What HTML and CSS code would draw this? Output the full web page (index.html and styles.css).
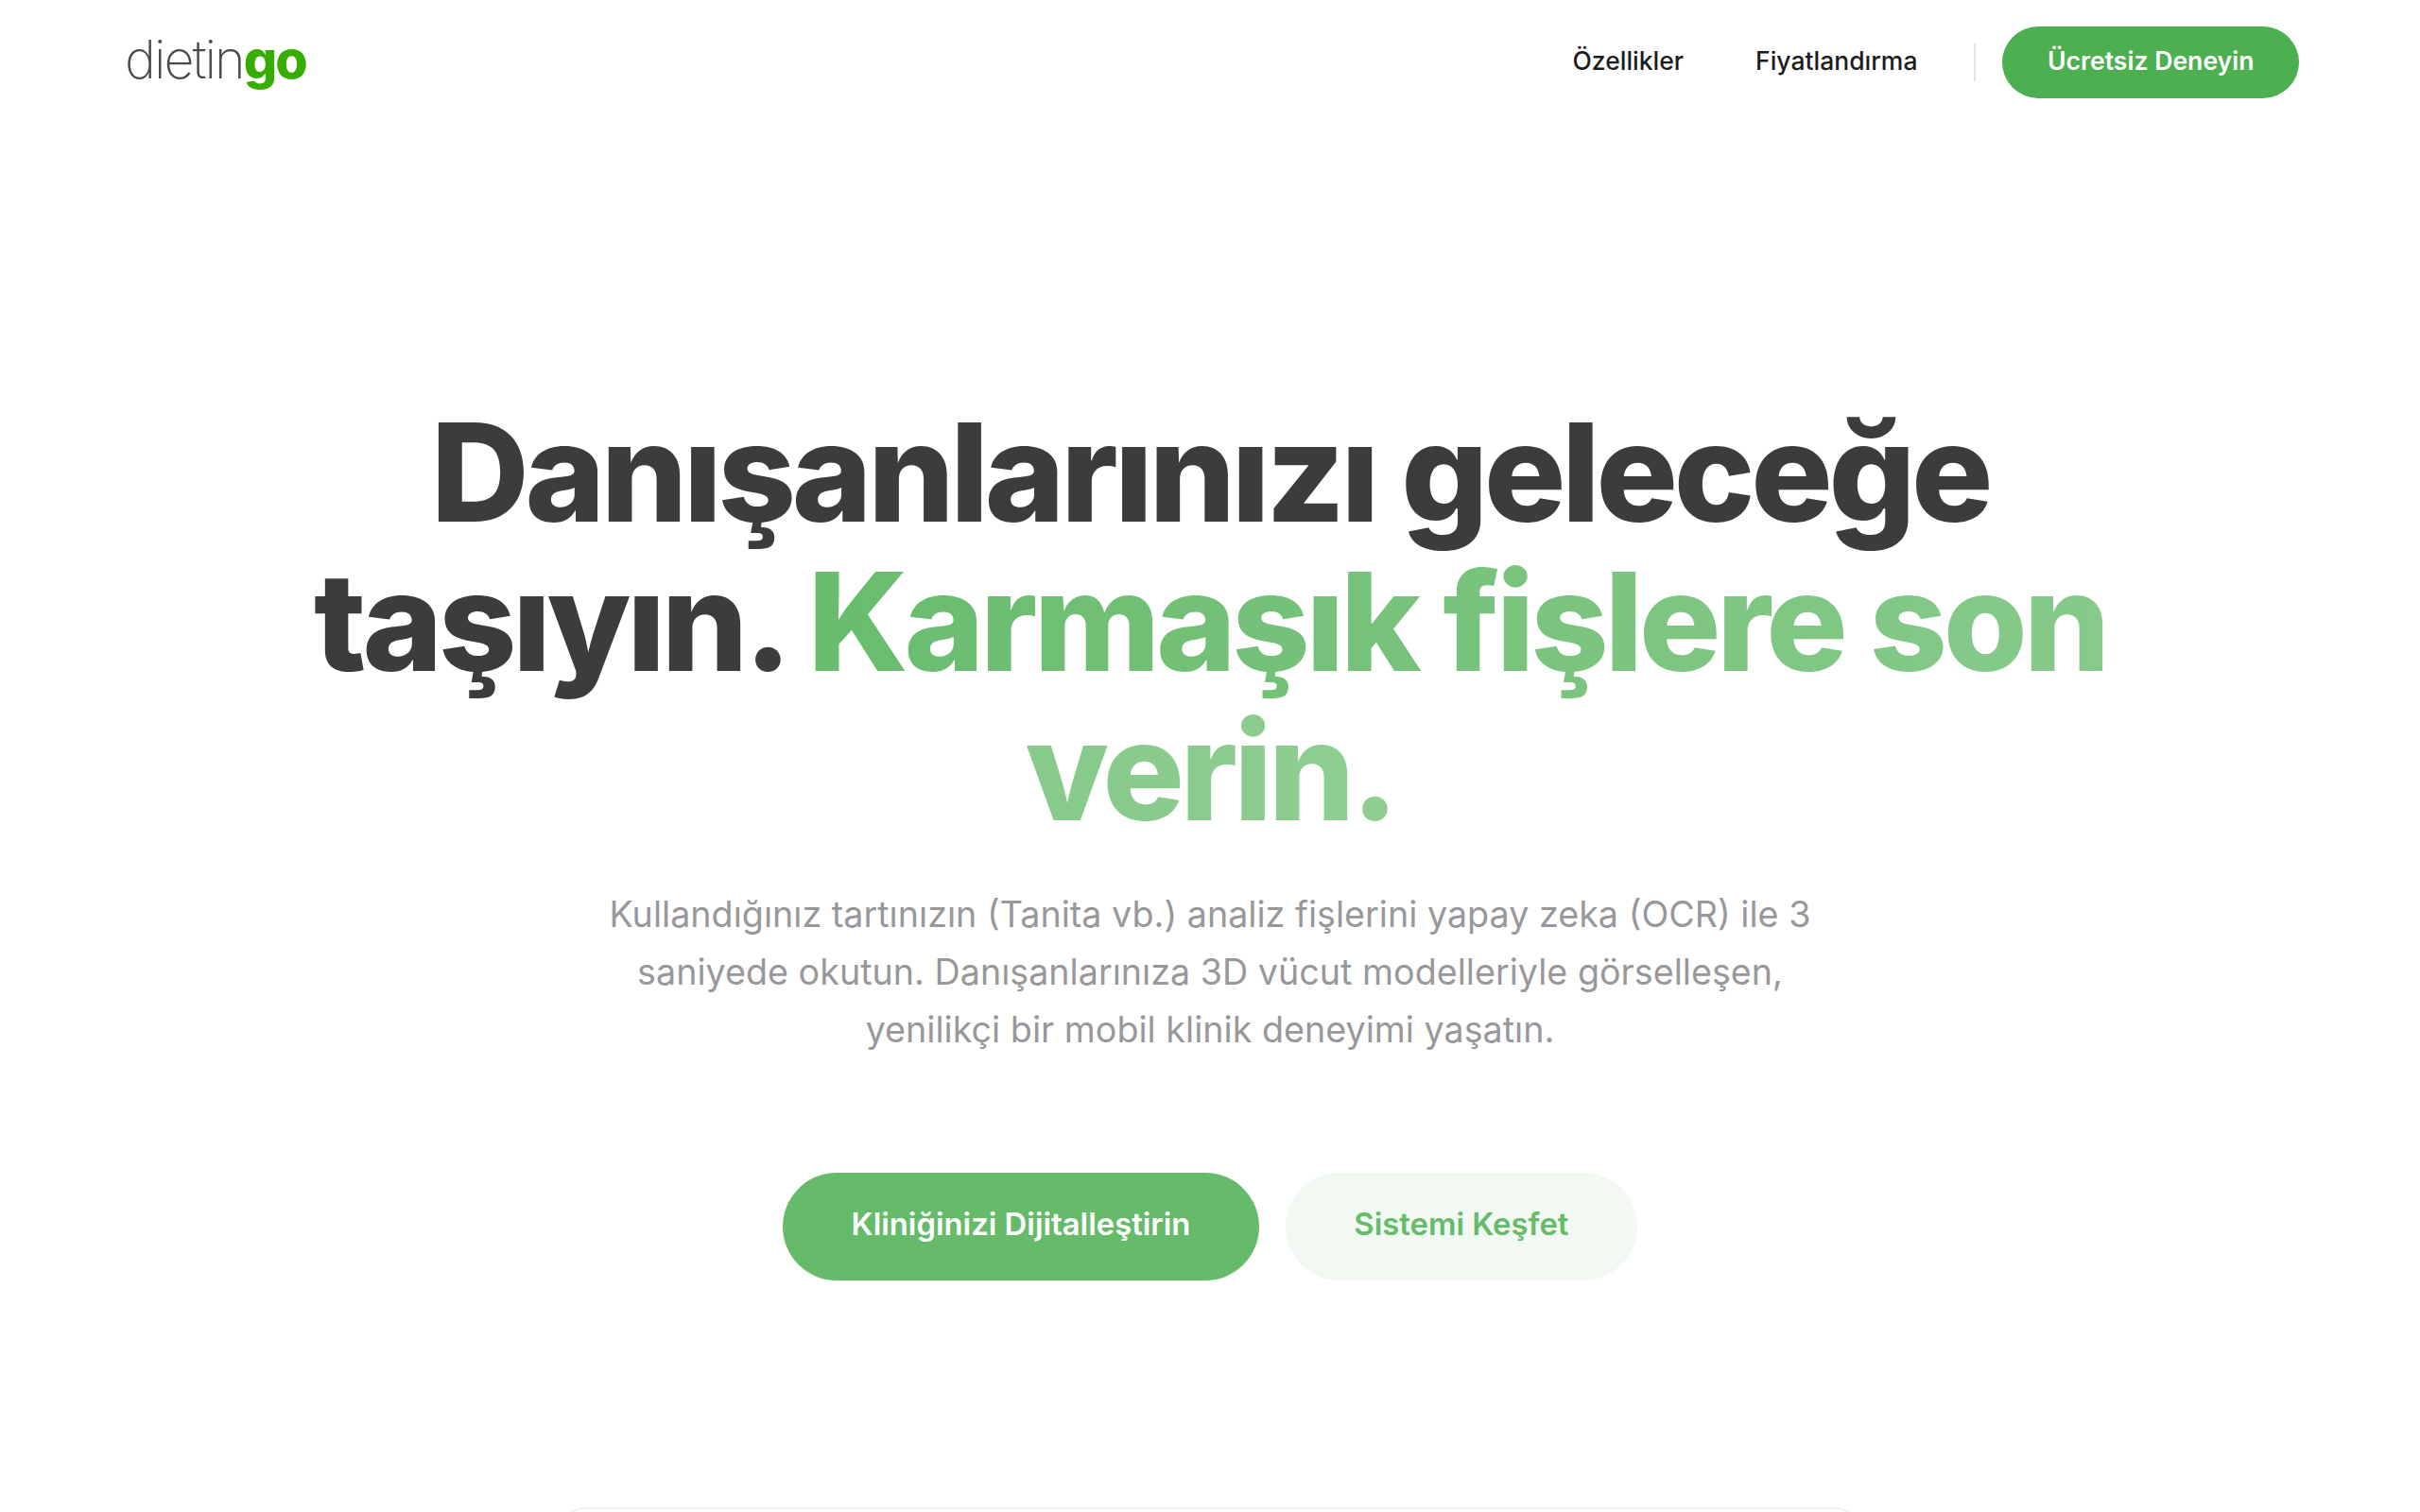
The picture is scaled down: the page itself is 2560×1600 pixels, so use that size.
FILE: index.html
```html
<!DOCTYPE html>
<html lang="tr">
<head>
<meta charset="utf-8">
<title>dietingo</title>
<link rel="stylesheet" href="styles.css">
</head>
<body>

<!-- Top navigation -->
<header class="nav">
  <a class="logo" href="#"><span class="logo-thin">dietin</span><span class="logo-go">go</span></a>
  <nav class="nav-right">
    <a class="nav-link" href="#">Özellikler</a>
    <a class="nav-link" href="#">Fiyatlandırma</a>
    <span class="nav-sep"></span>
    <a class="nav-cta" href="#">Ücretsiz Deneyin</a>
  </nav>
</header>

<!-- Hero -->
<main class="hero">
  <h1 class="hero-title">Danışanlarınızı geleceğe taşıyın. <span class="hero-accent">Karmaşık fişlere son verin.</span></h1>
  <p class="hero-text">Kullandığınız tartınızın (Tanita vb.) analiz fişlerini yapay zeka (OCR) ile 3 saniyede okutun. Danışanlarınıza 3D vücut modelleriyle görselleşen, yenilikçi bir mobil klinik deneyimi yaşatın.</p>
  <div class="hero-buttons">
    <a class="btn btn-primary" href="#">Kliniğinizi Dijitalleştirin</a>
    <a class="btn btn-soft" href="#">Sistemi Keşfet</a>
  </div>
  <div class="preview-card"></div>
</main>

</body>
</html>
```

FILE: styles.css
```css
html, body {
  margin: 0;
  height: 1600px;
  overflow: hidden;
  background: #fff;
}

body {
  font-family: "Inter", "Liberation Sans", sans-serif;
}

a {
  text-decoration: none;
}

/* Top navigation */
.nav {
  display: flex;
  justify-content: space-between;
  align-items: center;
  padding: 28px 128px 0 132px;
  height: 76px;
}

.logo {
  font-size: 55.6px;
  letter-spacing: -0.035em;
  line-height: 70px;
  padding-bottom: 6px;
}

.logo-thin {
  color: #4a4a4a;
  font-weight: 200;
}

.logo-go {
  color: #36ad00;
  font-weight: 800;
}

.nav-right {
  display: flex;
  align-items: center;
}

.nav-link {
  color: #1c1c1e;
  font-size: 26.5px;
  font-weight: 500;
  margin-right: 76px;
  padding-bottom: 4px;
}

.nav-link + .nav-link {
  margin-right: 60px;
}

.nav-sep {
  width: 2px;
  height: 40px;
  background: #e4e4e4;
  margin-right: 28px;
}

.nav-cta {
  display: flex;
  align-items: center;
  box-sizing: border-box;
  height: 76px;
  padding: 0 47.5px 5px;
  border-radius: 38px;
  background: #4caf50;
  color: #fff;
  font-size: 26.6px;
  font-weight: 600;
}

/* Hero */
.hero {
  display: flex;
  flex-direction: column;
  align-items: center;
  padding-top: 317px;
}

.hero-title {
  margin: 0;
  width: 2000px;
  color: #3c3c3e;
  font-size: 144px;
  font-weight: 800;
  line-height: 158px;
  letter-spacing: -4.3px;
  text-align: center;
}

.hero-accent {
  background: linear-gradient(90deg, #69bc6e, #8fce92);
  -webkit-background-clip: text;
  background-clip: text;
  color: transparent;
}

.hero-text {
  margin: 42px 0 0;
  width: 1300px;
  color: #98989b;
  font-size: 37.7px;
  line-height: 61px;
  text-align: center;
}

.hero-buttons {
  display: flex;
  gap: 28px;
  margin-top: 121px;
}

.btn {
  display: flex;
  align-items: center;
  box-sizing: border-box;
  height: 114px;
  padding: 0 72.5px 6px;
  border-radius: 57px;
  font-size: 32.8px;
  font-weight: 600;
}

.btn-primary {
  background: #66bb6a;
  color: #fff;
}

.btn-soft {
  background: #f2f9f3;
  color: #66bb6a;
}

.preview-card {
  width: 1380px;
  height: 400px;
  margin-top: 240px;
  border: 2px solid #f0f0f0;
  border-radius: 32px;
}
```
